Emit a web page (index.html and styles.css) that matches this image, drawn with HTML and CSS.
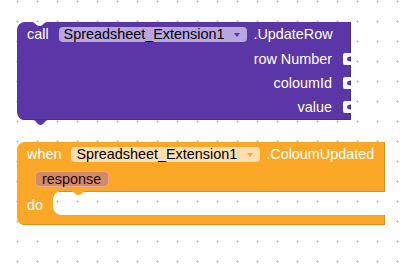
FILE: index.html
```html
<!DOCTYPE html>
<html lang="en">
<head>
    <meta charset="UTF-8">
    <title>Blocks</title>
    <link rel="stylesheet" href="styles.css">
</head>
<body>
    <div class="workspace">
        <svg class="grid" width="408" height="264">
            <defs>
                <pattern id="dots" patternUnits="userSpaceOnUse" x="7" y="-9" width="20" height="20">
                    <path d="M9 10.5H12M10.5 9V12" stroke="#ccc" stroke-width="1"/>
                </pattern>
            </defs>
            <rect width="408" height="264" fill="url(#dots)"/>
        </svg>

        <!-- method call block -->
        <div class="block call-block">
            <svg class="notch-top" width="15" height="4"><path d="M0 0C3 0 4 4 7.5 4S12 0 15 0Z" fill="#fff"/></svg>
            <div class="head">
                <span class="label">call</span>
                <span class="field field-purple">Spreadsheet_Extension1<i class="caret"></i></span>
                <span class="label method">.UpdateRow</span>
            </div>
            <div class="arg">row Number<svg class="jack" width="8" height="12"><path d="M8 0H2Q0 0 0 2V10Q0 12 2 12H8V8.5Q4 8.5 4 6T8 3.5Z" fill="#fff"/></svg></div>
            <div class="arg">coloumId<svg class="jack" width="8" height="12"><path d="M8 0H2Q0 0 0 2V10Q0 12 2 12H8V8.5Q4 8.5 4 6T8 3.5Z" fill="#fff"/></svg></div>
            <div class="arg">value<svg class="jack" width="8" height="12"><path d="M8 0H2Q0 0 0 2V10Q0 12 2 12H8V8.5Q4 8.5 4 6T8 3.5Z" fill="#fff"/></svg></div>
            <svg class="tab-bottom" width="15" height="5"><path d="M0 0C3 0 4 5 7.5 5S12 0 15 0Z" fill="#5b36a7"/></svg>
        </div>

        <!-- event block -->
        <div class="block event-block">
            <div class="event-top">
                <div class="head">
                    <span class="label">when</span>
                    <span class="field field-orange">Spreadsheet_Extension1<i class="caret"></i></span>
                    <span class="label method">.ColoumUpdated</span>
                </div>
                <div class="params">
                    <span class="param">response</span>
                </div>
            </div>
            <div class="event-body">
                <span class="label do">do</span>
                <div class="slot">
                    <svg class="slot-notch" width="15" height="4"><path d="M0 0C3 0 4 4 7.5 4S12 0 15 0Z" fill="#fba829"/></svg>
                </div>
            </div>
            <div class="event-foot"></div>
        </div>
    </div>
</body>
</html>
```

FILE: styles.css
```css
body {
    margin: 0;
    background: #fff;
    font-family: "Liberation Sans", Arial, sans-serif;
    font-size: 14.4px;
}
.workspace {
    position: relative;
    width: 408px;
    height: 264px;
    overflow: hidden;
}
.grid {
    position: absolute;
    top: 0;
    left: 0;
}
.block {
    position: absolute;
    color: #fff;
}
.label {
    white-space: nowrap;
}
.head {
    display: flex;
    align-items: center;
    height: 15px;
    line-height: 15px;
}
.field {
    display: flex;
    align-items: center;
    height: 15px;
    padding: 0 7px 0 5px;
    margin: 0 6px 0 10px;
    border-radius: 4px;
    color: #000;
    white-space: nowrap;
}
.caret {
    width: 0;
    height: 0;
    margin-left: 10px;
    border-left: 3px solid transparent;
    border-right: 3px solid transparent;
}

/* call block */
.call-block {
    left: 17px;
    top: 22px;
    width: 334px;
    height: 98px;
    padding: 5px 0 0 10px;
    box-sizing: border-box;
    background: #5b36a7;
    border-radius: 8px 0 0 8px;
    box-shadow: inset -1px -1px 0 #4a2b8c;
}
.field-purple {
    background: #b9a6df;
}
.field-purple .caret {
    border-top: 4px solid #5b36a7;
}
.notch-top {
    position: absolute;
    left: 15px;
    top: 0;
}
.tab-bottom {
    position: absolute;
    left: 16px;
    top: 98px;
}
.arg {
    position: relative;
    display: flex;
    justify-content: flex-end;
    align-items: center;
    height: 24px;
    padding-right: 19px;
    margin-left: -10px;
}
.head + .arg {
    margin-top: 5px;
}
.jack {
    position: absolute;
    right: 0;
    top: 6px;
}

/* event block */
.event-block {
    left: 17px;
    top: 142px;
    width: 368px;
}
.event-top {
    height: 49px;
    padding: 5px 0 0 10px;
    box-sizing: border-box;
    background: #fba829;
    border-radius: 8px 0 0 0;
    box-shadow: inset -1px 0 0 #dc8e1e;
}
.field-orange {
    background: #ffdeb0;
}
.field-orange .caret {
    border-top: 4px solid #fba829;
}
.params {
    display: flex;
    margin-top: 9px;
    padding-left: 8px;
}
.param {
    height: 16px;
    line-height: 15px;
    padding: 0 7px 0 6px;
    box-sizing: border-box;
    background: #d6896a;
    border: 1px solid #e9aa8d;
    border-radius: 5px;
    color: #1a0a00;
}
.event-body {
    display: flex;
    height: 24px;
}
.do {
    width: 36px;
    padding: 2px 0 0 10px;
    box-sizing: border-box;
    line-height: 24px;
    background: #fba829;
}
.slot {
    position: relative;
    flex: 1;
    box-shadow: inset 0 1px 0 #dc8e1e;
}
.slot::before,
.slot::after {
    content: "";
    position: absolute;
    left: 0;
    width: 8px;
    height: 8px;
}
.slot::before {
    top: 0;
    background: radial-gradient(circle at 100% 100%, transparent 7.5px, #fba829 8px);
}
.slot::after {
    bottom: 0;
    background: radial-gradient(circle at 100% 0, transparent 7.5px, #fba829 8px);
}
.slot-notch {
    position: absolute;
    left: 18px;
    top: 0;
}
.event-foot {
    height: 10px;
    background: #fba829;
    border-radius: 0 0 0 8px;
    box-shadow: inset -1px -1px 0 #dc8e1e;
}
```
